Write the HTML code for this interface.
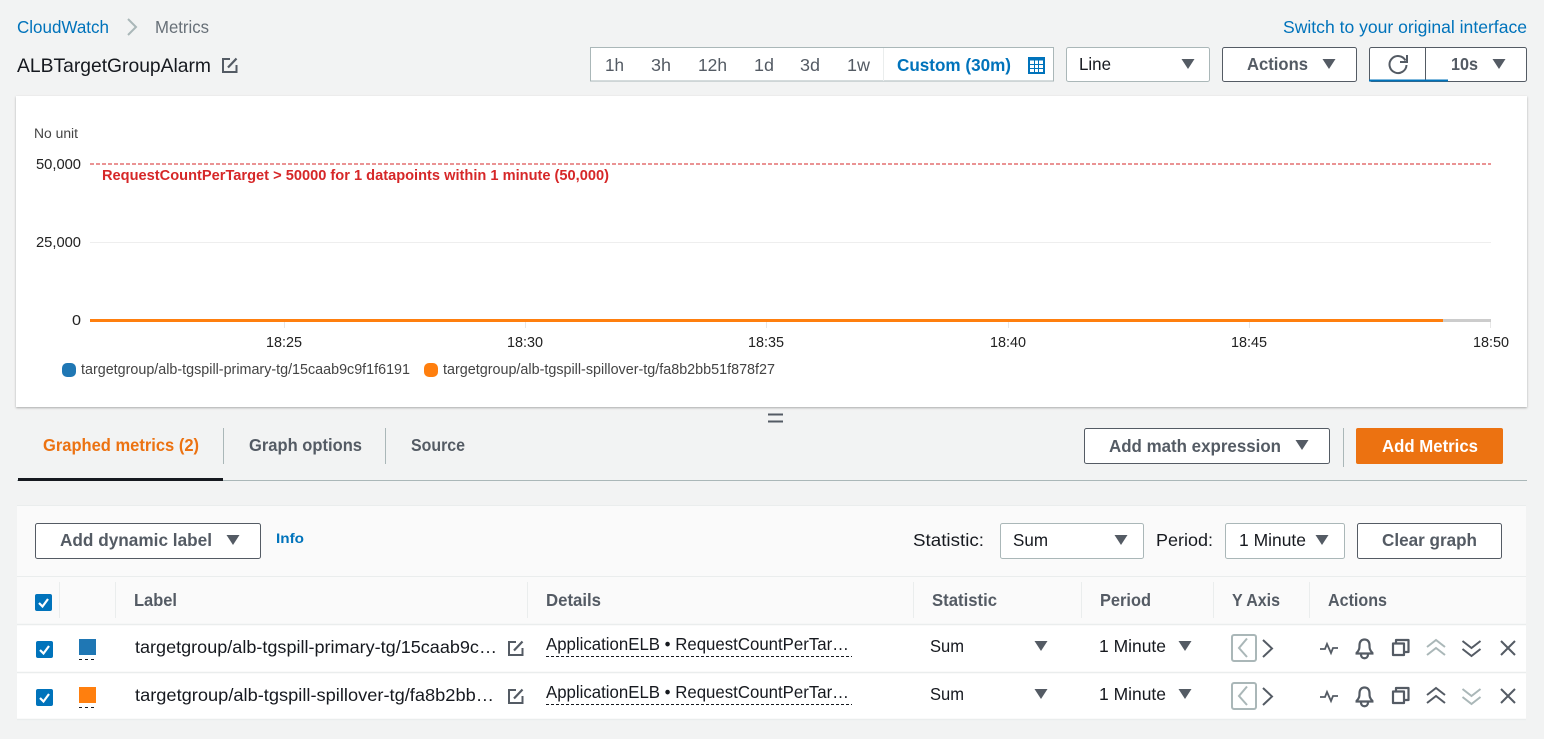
<!DOCTYPE html>
<html><head><meta charset="utf-8"><style>
html,body{margin:0;padding:0;background:#f2f3f3;width:1544px;height:739px;overflow:hidden}
svg{display:block}
text{font-family:"Liberation Sans",sans-serif;font-size:17.5px;fill:#16191f}
.b{font-weight:700;fill:#545b64;font-size:17.5px}
.g{fill:#545b64}
.l{fill:#0073bb}
.c{font-size:15px;fill:#222}
.lg{font-size:14.5px;fill:#444}
.ic{fill:none;stroke:#545b64;stroke-width:2}
</style></head><body>
<svg width="1544" height="739" viewBox="0 0 1544 739" xmlns="http://www.w3.org/2000/svg">
<defs>
<filter id="s" x="-2%" y="-2%" width="104%" height="104%"><feDropShadow dx="0" dy="1" stdDeviation="1" flood-color="#000" flood-opacity=".3"/></filter>
<polygon id="ar" points="0.500,0 13.500,0 7,10" fill="#545b64"/>
<g id="ed" fill="none" stroke="#545b64" stroke-width="2"><path d="M8 2H1V15H14.500V8"/><path d="M6 10.500L14.500 1.500" stroke-width="2.200"/></g>
<g id="ck"><rect width="17" height="17" rx="2" fill="#0073bb"/><path d="M4 9L7.500 12.500L13 5" fill="none" stroke="#fff" stroke-width="2.200"/></g>
<g id="acts" fill="none" stroke="#545b64" stroke-width="2">
<path d="M1320 649H1325L1327 644L1331 653L1333 648H1338" stroke-width="1.800"/>
<path d="M1355.500 653.500H1373.500M1356.500 653C1359.500 650 1359.500 648 1359.500 645.500C1359.500 641.500 1361.500 639.500 1364.500 639.500C1367.500 639.500 1369.500 641.500 1369.500 645.500C1369.500 648 1369.500 650 1372.500 653" stroke-linejoin="round" stroke-width="2.200"/><path d="M1361 654.500C1361 659.500 1368 659.500 1368 654.500" stroke-width="2.200"/>
<path d="M1393 643.500H1404V655H1393ZM1396 643V640H1408.500V652H1404.500" stroke-linejoin="round" stroke-width="2.200"/>
<path d="M1501 641L1515 655M1515 641L1501 655"/>
</g>
<g id="yax" fill="none"><rect x="1232" y="635" width="24" height="26" rx="2" stroke="#aab7b8" stroke-width="2" fill="#fff"/><path d="M1247 638.500L1239 648L1247 657" stroke="#aab7b8" stroke-width="2"/><path d="M1263 640L1272 648.500L1263 657" stroke="#545b64" stroke-width="2"/></g>
<path id="upc" d="M-9 -1L0 -8L9 -1M-9 7L0 0L9 7" fill="none" stroke-width="2"/>
</defs>

<rect width="1544" height="739" fill="#f2f3f3"/>

<text x="17" y="33" textLength="92" lengthAdjust="spacingAndGlyphs" class="l">CloudWatch</text>
<path d="M128 19L136 27L128 35" fill="none" stroke="#aab7b8" stroke-width="2"/>
<text x="155" y="33" textLength="54" lengthAdjust="spacingAndGlyphs" style="fill:#687078">Metrics</text>
<text x="1283" y="33" textLength="244" lengthAdjust="spacingAndGlyphs" class="l">Switch to your original interface</text>
<text x="17" y="72" textLength="194" lengthAdjust="spacingAndGlyphs" style="font-size:19.500px">ALBTargetGroupAlarm</text>
<use href="#ed" x="222" y="57"/>

<rect x="590.500" y="47.500" width="463" height="33.500" fill="#fff" stroke="#aab7b8"/>
<path d="M883.500 48V81" stroke="#eaeded"/>
<text x="605" y="71" textLength="19" lengthAdjust="spacingAndGlyphs" class="g">1h</text>
<text x="651" y="71" textLength="20" lengthAdjust="spacingAndGlyphs" class="g">3h</text>
<text x="698" y="71" textLength="29" lengthAdjust="spacingAndGlyphs" class="g">12h</text>
<text x="754" y="71" textLength="20" lengthAdjust="spacingAndGlyphs" class="g">1d</text>
<text x="800" y="71" textLength="20" lengthAdjust="spacingAndGlyphs" class="g">3d</text>
<text x="847" y="71" textLength="23" lengthAdjust="spacingAndGlyphs" class="g">1w</text>
<text x="897" y="71" textLength="114" lengthAdjust="spacingAndGlyphs" class="b" style="fill:#0073bb">Custom (30m)</text>
<g><rect x="1028" y="57" width="17" height="17" fill="#0073bb"/><path d="M1030 60.500H1043V72H1030Z" fill="#fff"/><path d="M1034.500 60V72M1038.500 60V72M1030 64.500H1043M1030 68.500H1043" stroke="#0073bb"/></g>

<rect x="1066.500" y="47.500" width="143" height="34" rx="2" fill="#fff" stroke="#aab7b8"/>
<text x="1079" y="70" textLength="32" lengthAdjust="spacingAndGlyphs">Line</text>
<use href="#ar" x="1181" y="59"/>

<rect x="1222.500" y="47.500" width="134" height="34" rx="2" fill="#fff" stroke="#545b64"/>
<text x="1247" y="70" textLength="61" lengthAdjust="spacingAndGlyphs" class="b">Actions</text>
<use href="#ar" x="1322" y="59"/>

<rect x="1369.500" y="47.500" width="157" height="34" rx="2" fill="#fff" stroke="#545b64"/>
<path d="M1425.500 48V81" stroke="#545b64"/>
<path d="M1369 80.500H1448" stroke="#0073bb" stroke-width="2"/>
<path d="M1405.500 60.500A8.500 8.500 0 1 0 1406.500 65" class="ic" stroke-width="2.200"/><path d="M1407 55V62H1400" class="ic"/>
<text x="1451" y="70" textLength="27" lengthAdjust="spacingAndGlyphs" class="b">10s</text>
<use href="#ar" x="1492" y="59"/>

<rect x="16" y="96" width="1511" height="311" fill="#fff" filter="url(#s)"/>
<text x="34" y="138" textLength="44" lengthAdjust="spacingAndGlyphs" class="lg" style="font-size:13.500px">No unit</text>
<text x="36" y="169" textLength="45" lengthAdjust="spacingAndGlyphs" class="c">50,000</text>
<text x="36" y="247" textLength="45" lengthAdjust="spacingAndGlyphs" class="c">25,000</text>
<text x="72" y="325" textLength="9" lengthAdjust="spacingAndGlyphs" class="c">0</text>
<path d="M90 242.500H1491" stroke="#eee"/>
<path d="M90 164H1491" stroke="#d62728" stroke-dasharray="4 2"/>
<text x="102" y="180" textLength="507" lengthAdjust="spacingAndGlyphs" class="b" style="font-size:14.500px;fill:#d62728">RequestCountPerTarget &gt; 50000 for 1 datapoints within 1 minute (50,000)</text>
<path d="M284.500 320V328M525.500 320V328M766.500 320V328M1008.500 320V328M1249.500 320V328M1490.500 320V328" stroke="#e6e6e6"/>
<path d="M90 320.500H1491" stroke="#ccc" stroke-width="3"/>
<path d="M90 320.500H1443" stroke="#ff7f0e" stroke-width="3"/>
<text x="266" y="347" textLength="36" lengthAdjust="spacingAndGlyphs" class="c">18:25</text>
<text x="507" y="347" textLength="36" lengthAdjust="spacingAndGlyphs" class="c">18:30</text>
<text x="748" y="347" textLength="36" lengthAdjust="spacingAndGlyphs" class="c">18:35</text>
<text x="990" y="347" textLength="36" lengthAdjust="spacingAndGlyphs" class="c">18:40</text>
<text x="1231" y="347" textLength="36" lengthAdjust="spacingAndGlyphs" class="c">18:45</text>
<text x="1473" y="347" textLength="36" lengthAdjust="spacingAndGlyphs" class="c">18:50</text>
<rect x="62" y="363" width="14" height="14" rx="5" fill="#1f77b4"/>
<text x="81" y="374" textLength="329" lengthAdjust="spacingAndGlyphs" class="lg">targetgroup/alb-tgspill-primary-tg/15caab9c9f1f6191</text>
<rect x="424" y="363" width="14" height="14" rx="5" fill="#ff7f0e"/>
<text x="443" y="374" textLength="332" lengthAdjust="spacingAndGlyphs" class="lg">targetgroup/alb-tgspill-spillover-tg/fa8b2bb51f878f27</text>

<path d="M768 414.500H783M768 421.500H783" stroke="#545b64" stroke-width="2"/>

<text x="43" y="451" textLength="156" lengthAdjust="spacingAndGlyphs" class="b" style="fill:#ec7211">Graphed metrics (2)</text>
<text x="249" y="451" textLength="113" lengthAdjust="spacingAndGlyphs" class="b">Graph options</text>
<text x="411" y="451" textLength="54" lengthAdjust="spacingAndGlyphs" class="b">Source</text>
<path d="M223.500 428V464M385.500 428V464" stroke="#aab7b8"/>
<path d="M17 480.500H1527" stroke="#aab7b8"/>
<rect x="18" y="478" width="205" height="3" fill="#16191f"/>
<rect x="1084.500" y="428.500" width="245" height="35" rx="2" fill="#fff" stroke="#545b64"/>
<text x="1109" y="452" textLength="172" lengthAdjust="spacingAndGlyphs" class="b">Add math expression</text>
<use href="#ar" x="1295" y="440"/>
<path d="M1343.500 428V467" stroke="#aab7b8"/>
<rect x="1356" y="428" width="147" height="36" rx="2" fill="#ec7211"/>
<text x="1382" y="452" textLength="96" lengthAdjust="spacingAndGlyphs" class="b" style="fill:#fff">Add Metrics</text>

<rect x="17" y="505.500" width="1509" height="119" fill="#fafafa"/>
<path d="M17 505.500H1526M17 576.500H1526" stroke="#eaeded"/>
<rect x="35.500" y="523.500" width="225" height="35" rx="2" fill="#fff" stroke="#545b64"/>
<text x="60" y="546" textLength="152" lengthAdjust="spacingAndGlyphs" class="b">Add dynamic label</text>
<use href="#ar" x="226" y="535"/>
<text x="276" y="543" textLength="28" lengthAdjust="spacingAndGlyphs" class="b" style="font-size:14px;fill:#0073bb">Info</text>
<text x="913" y="546" textLength="71" lengthAdjust="spacingAndGlyphs">Statistic:</text>
<rect x="1000.500" y="523.500" width="143" height="35" rx="2" fill="#fff" stroke="#aab7b8"/>
<text x="1013" y="546" textLength="35" lengthAdjust="spacingAndGlyphs">Sum</text>
<use href="#ar" x="1114" y="535"/>
<text x="1156" y="546" textLength="57" lengthAdjust="spacingAndGlyphs">Period:</text>
<rect x="1225.500" y="523.500" width="119" height="35" rx="2" fill="#fff" stroke="#aab7b8"/>
<text x="1239" y="546" textLength="67" lengthAdjust="spacingAndGlyphs">1 Minute</text>
<use href="#ar" x="1315" y="535"/>
<rect x="1357.500" y="523.500" width="144" height="35" rx="2" fill="#fff" stroke="#545b64"/>
<text x="1382" y="546" textLength="95" lengthAdjust="spacingAndGlyphs" class="b">Clear graph</text>

<path d="M59.500 582V618M115.500 582V618M527.500 582V618M913.500 582V618M1081.500 582V618M1213.500 582V618M1309.500 582V618" stroke="#eaeded"/>
<use href="#ck" x="35" y="594"/>
<text x="134" y="606" textLength="43" lengthAdjust="spacingAndGlyphs" class="b">Label</text>
<text x="546" y="606" textLength="55" lengthAdjust="spacingAndGlyphs" class="b">Details</text>
<text x="932" y="606" textLength="65" lengthAdjust="spacingAndGlyphs" class="b">Statistic</text>
<text x="1100" y="606" textLength="51" lengthAdjust="spacingAndGlyphs" class="b">Period</text>
<text x="1232" y="606" textLength="48" lengthAdjust="spacingAndGlyphs" class="b">Y Axis</text>
<text x="1328" y="606" textLength="59" lengthAdjust="spacingAndGlyphs" class="b">Actions</text>

<rect x="17" y="625" width="1509" height="95" fill="#fff"/>
<path d="M17 624.500H1526M17 672.500H1526M17 719.500H1526" stroke="#eaeded" stroke-width="1.500"/>

<use href="#ck" x="36" y="641"/>
<rect x="79" y="639" width="17" height="16" fill="#1f77b4"/>
<path d="M79 659.500H96" stroke="#16191f" stroke-dasharray="3 3"/>
<text x="135" y="653" textLength="362" lengthAdjust="spacingAndGlyphs">targetgroup/alb-tgspill-primary-tg/15caab9c…</text>
<use href="#ed" x="508" y="640"/>
<text x="546" y="650" textLength="303" lengthAdjust="spacingAndGlyphs">ApplicationELB • RequestCountPerTar…</text>
<path d="M546 656.500H852" stroke="#16191f" stroke-dasharray="3 2"/>
<text x="930" y="652" textLength="34" lengthAdjust="spacingAndGlyphs">Sum</text>
<use href="#ar" x="1034" y="641"/>
<text x="1099" y="652" textLength="67" lengthAdjust="spacingAndGlyphs">1 Minute</text>
<use href="#ar" x="1178" y="641"/>
<use href="#yax"/>
<use href="#acts"/>
<use href="#upc" x="1436" y="648" stroke="#aab7b8"/>
<use href="#upc" transform="translate(1471.500 648) scale(1 -1)" stroke="#545b64"/>

<use href="#ck" x="36" y="689"/>
<rect x="79" y="687" width="17" height="16" fill="#ff7f0e"/>
<path d="M79 707.500H96" stroke="#16191f" stroke-dasharray="3 3"/>
<text x="135" y="701" textLength="359" lengthAdjust="spacingAndGlyphs">targetgroup/alb-tgspill-spillover-tg/fa8b2bb…</text>
<use href="#ed" x="508" y="688"/>
<text x="546" y="698" textLength="303" lengthAdjust="spacingAndGlyphs">ApplicationELB • RequestCountPerTar…</text>
<path d="M546 704.500H852" stroke="#16191f" stroke-dasharray="3 2"/>
<text x="930" y="700" textLength="34" lengthAdjust="spacingAndGlyphs">Sum</text>
<use href="#ar" x="1034" y="689"/>
<text x="1099" y="700" textLength="67" lengthAdjust="spacingAndGlyphs">1 Minute</text>
<use href="#ar" x="1178" y="689"/>
<use href="#yax" y="48"/>
<use href="#acts" y="48"/>
<use href="#upc" x="1436" y="696" stroke="#545b64"/>
<use href="#upc" transform="translate(1471.500 696) scale(1 -1)" stroke="#aab7b8"/>
</svg>
</body></html>
